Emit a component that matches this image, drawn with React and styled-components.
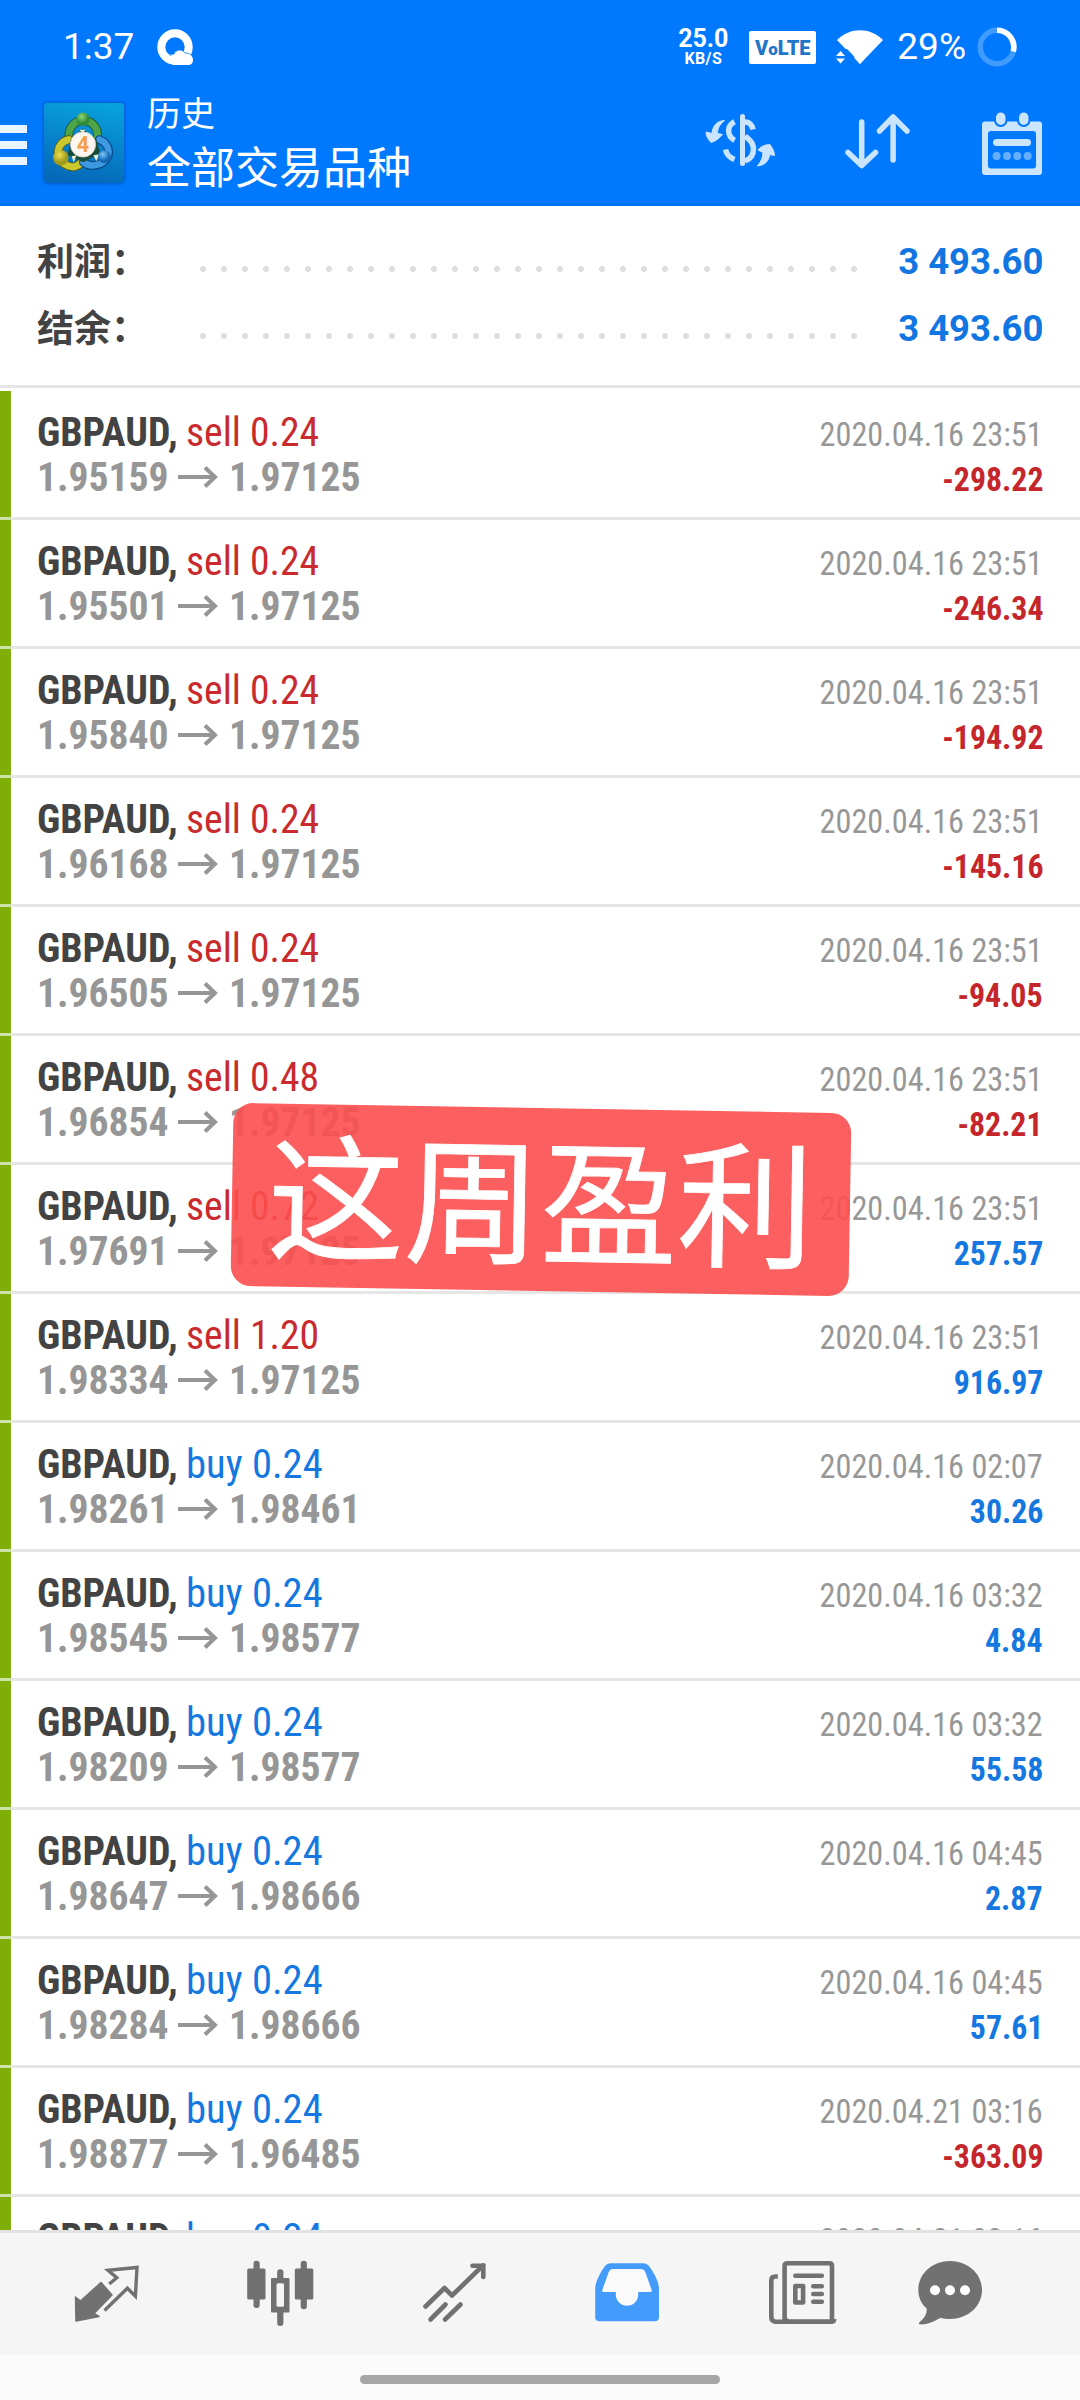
import styled, { createGlobalStyle } from "styled-components";

const GlobalStyle = createGlobalStyle`
    * {
        box-sizing: border-box;
    }
    body {
        margin: 0;
        background: #fff;
        font-family: Roboto, "Noto Sans CJK SC", sans-serif;
    }
`

const Screen = styled.div`
    position: relative;
    width: 1080px;
    height: 2400px;
    display: flex;
    flex-direction: column;
    overflow: hidden;
    background: #fff;
`

const Header = styled.header`
    height: 206px;
    flex: none;
    background: #0079ff;
    color: #fff;
    border-bottom: 3px solid #0073ee;
`

const StatusBar = styled.div`
    height: 94px;
    display: flex;
    align-items: center;
    padding: 0 63px 0 63px;
`

const Clock = styled.span`
    width: 94px;
    font-size: 37px;
    line-height: 94px;
`

const StatusIcons = styled.div`
    display: flex;
    align-items: center;
    margin-left: auto;
`

const NetSpeed = styled.div`
    width: 50px;
    margin-right: 21px;
    display: flex;
    flex-direction: column;
    align-items: center;
    font-weight: 700;
    font-size: 25px;
    line-height: 23px;
    white-space: nowrap;
`

const NetUnit = styled.span`
    font-size: 16px;
    line-height: 17px;
    letter-spacing: 0.4px;
`

const Volte = styled.span`
    width: 67px;
    height: 33px;
    margin: 1px 20px 0 0;
    border-radius: 2px;
    background: #fff;
    color: #1f76c8;
    font-size: 20px;
    font-weight: 900;
    line-height: 34px;
    text-align: center;
`

const VolteO = styled.span`
    font-size: 17px;
`

const Battery = styled.span`
    margin: 0 11px 0 13px;
    font-size: 37px;
    line-height: 94px;
`

const AppBar = styled.div`
    height: 109px;
    display: flex;
    align-items: flex-start;
`

const Menu = styled.div`
    width: 27px;
    height: 40px;
    margin: 31px 17px 0 0;
    display: flex;
    flex-direction: column;
    justify-content: space-between;
`

const MenuLine = styled.span`
    height: 8px;
    background: #eaf6ff;
`

const Logo = styled.svg`
    width: 80px;
    height: 80px;
    margin-top: 9px;
    border-radius: 4px;
    box-shadow: 0 0 3px 1px rgba(0, 60, 150, 0.5);
`

const Titles = styled.div`
    flex: 1;
    margin-left: 23px;
    white-space: nowrap;
`

const Caption = styled.div`
    font-size: 34px;
    line-height: 40px;
`

const Title = styled.div`
    font-size: 44px;
    line-height: 64px;
    margin-top: 3px;
`

const Actions = styled.div`
    display: flex;
    gap: 62px;
    margin: 15px 32px 0 0;
`

const Summary = styled.section`
    height: 182px;
    flex: none;
    padding: 22px 37px 0;
    border-bottom: 3px solid #e6e6e6;
`

const SummaryRow = styled.div`
    height: 67px;
    display: flex;
    align-items: center;
`

const SummaryLabel = styled.span`
    width: 163px;
    padding-bottom: 5px;
    font-size: 37px;
    font-weight: 600;
    color: #434343;
    white-space: nowrap;
`

const Dots = styled.span`
    width: 672px;
    height: 6px;
    margin-top: 15px;
    background: radial-gradient(circle at 3px 3px, #dedede 2.6px, transparent 3.4px) 0 0 / 21px 6px;
`

const SummaryValue = styled.span`
    margin-left: auto;
    font-size: 37px;
    font-weight: 700;
    color: #1176e2;
    transform: scaleX(0.985);
    transform-origin: right;
`

const List = styled.ul`
    flex: 1;
    min-height: 0;
    overflow: hidden;
    margin: 0;
    padding: 3px 0 0;
    list-style: none;
`

const Deal = styled.li`
    height: 129px;
    display: flex;
    padding-right: 37px;
    border-bottom: 3px solid #e6e6e6;
    font-family: "Roboto Condensed", Roboto, sans-serif;
    font-stretch: 75%;
    white-space: nowrap;
`

const Stripe = styled.span`
    width: 11px;
    background: #7fae08;
    box-shadow: 0 3px 0 #cfe2a6;
`

const DealInfo = styled.div`
    flex: 1;
    padding: 19px 0 0 26px;
`

const DealMeta = styled.div`
    padding-top: 21px;
    display: flex;
    flex-direction: column;
    align-items: flex-end;
`

const Line = styled.div`
    height: 45px;
    display: flex;
    align-items: center;
    font-size: 41px;
    line-height: 45px;
`

const Symbol = styled.span`
    width: 149px;
    font-weight: 700;
    color: #434343;
    transform: scaleX(0.97);
    transform-origin: left;
`

const Volume = styled.span`
    color: ${({ $side }) => ($side === "sell" ? "#c92a2e" : "#1478e0")};
    transform: scaleX(${({ $side }) => ($side === "sell" ? 0.967 : 0.99)});
    transform-origin: left;
`

const Price = styled.span`
    width: 130px;
    font-weight: 700;
    color: #969696;
    transform: scaleX(0.966);
    transform-origin: left;
`

const PriceArrow = styled.svg`
    flex: none;
    margin: 0 11px 0 11px;
`

const Time = styled.span`
    font-size: 33.5px;
    line-height: 45px;
    color: #979797;
    transform: scaleX(0.963);
    transform-origin: right;
`

const Profit = styled.span`
    font-size: 33.5px;
    line-height: 45px;
    font-weight: 700;
    color: ${({ $loss }) => ($loss ? "#c4262c" : "#1478e0")};
    transform: scaleX(0.95);
    transform-origin: right;
`

const TabBar = styled.nav`
    height: 125px;
    flex: none;
    display: flex;
    gap: 101.4px;
    padding: 23px 0 0 71px;
    background: #f5f5f5;
    border-top: 3px solid #e2e2e2;
`

const Tab = styled.span`
    width: 72px;
    height: 72px;
    flex: none;
    color: ${({ $active }) => ($active ? "#439bfb" : "#717171")};

    &:last-child {
        margin-left: -23.5px;
    }
`

const GestureArea = styled.div`
    height: 45px;
    flex: none;
    padding-top: 20px;
    background: #fafafa;
`

const GestureBar = styled.div`
    width: 360px;
    height: 9px;
    margin: 0 auto;
    border-radius: 5px;
    background: #a6a6a6;
`

const Sticker = styled.div`
    position: absolute;
    left: 232px;
    top: 1108px;
    width: 618px;
    height: 183px;
    border-radius: 20px;
    background: rgba(252, 78, 78, 0.9);
    color: #fff;
    font-family: "Noto Sans CJK SC", sans-serif;
    font-size: 136.5px;
    font-weight: 400;
    line-height: 174px;
    text-align: center;
    white-space: nowrap;
    -webkit-text-stroke: 0.8px #fff;
    transform: rotate(0.97deg);
`

const deals = [
    { side: "sell", lots: "0.24", open: "1.95159", close: "1.97125", time: "2020.04.16 23:51", profit: "-298.22" },
    { side: "sell", lots: "0.24", open: "1.95501", close: "1.97125", time: "2020.04.16 23:51", profit: "-246.34" },
    { side: "sell", lots: "0.24", open: "1.95840", close: "1.97125", time: "2020.04.16 23:51", profit: "-194.92" },
    { side: "sell", lots: "0.24", open: "1.96168", close: "1.97125", time: "2020.04.16 23:51", profit: "-145.16" },
    { side: "sell", lots: "0.24", open: "1.96505", close: "1.97125", time: "2020.04.16 23:51", profit: "-94.05" },
    { side: "sell", lots: "0.48", open: "1.96854", close: "1.97125", time: "2020.04.16 23:51", profit: "-82.21" },
    { side: "sell", lots: "0.72", open: "1.97691", close: "1.97125", time: "2020.04.16 23:51", profit: "257.57" },
    { side: "sell", lots: "1.20", open: "1.98334", close: "1.97125", time: "2020.04.16 23:51", profit: "916.97" },
    { side: "buy", lots: "0.24", open: "1.98261", close: "1.98461", time: "2020.04.16 02:07", profit: "30.26" },
    { side: "buy", lots: "0.24", open: "1.98545", close: "1.98577", time: "2020.04.16 03:32", profit: "4.84" },
    { side: "buy", lots: "0.24", open: "1.98209", close: "1.98577", time: "2020.04.16 03:32", profit: "55.58" },
    { side: "buy", lots: "0.24", open: "1.98647", close: "1.98666", time: "2020.04.16 04:45", profit: "2.87" },
    { side: "buy", lots: "0.24", open: "1.98284", close: "1.98666", time: "2020.04.16 04:45", profit: "57.61" },
    { side: "buy", lots: "0.24", open: "1.98877", close: "1.96485", time: "2020.04.21 03:16", profit: "-363.09" },
    { side: "buy", lots: "0.24", open: "1.98561", close: "1.96485", time: "2020.04.21 03:16", profit: "-316.40" },
]

function BrowserIcon() {
    return (
        <svg width="36" height="36" viewBox="0 0 36 36">
            <circle cx="18" cy="18" r="13.7" fill="none" stroke="#fff" strokeWidth="8" />
            <path d="M10 31c1-5 4-6 7-6 1-4 8-6 11-1 5 0 8 3 8 7 0 3-2 5-5 5H16z" fill="#fff" />
            <path d="M13 26.5c2-1 3-1 4-1.500 1-4 8-6 11-1 3 0 5 1 6 2" fill="none" stroke="#0079ff" strokeWidth="0.8" />
        </svg>
    )
}

function WifiIcon() {
    return (
        <svg width="48" height="36" viewBox="0 0 48 36">
            <path d="M1 11C14-2 34-2 47 11L24 35z" fill="#fff" />
            <path d="M-1 20h12l8 8-8 8H-1z" fill="#0079ff" />
            <path d="M13 21l11 14 6-7-10-12z" fill="#fff" />
            <path d="M0 27l4.500-5 4.500 5zM0 29.500h9l-4.500 5z" fill="#fff" />
        </svg>
    )
}

function BatteryIcon() {
    return (
        <svg width="40" height="40" viewBox="0 0 40 40" fill="none" strokeWidth="5.500">
            <circle cx="20" cy="20" r="16.800" stroke="#409bff" />
            <path d="M20 3.200A16.800 16.800 0 0 1 36.200 24.500" stroke="#fff" />
        </svg>
    )
}

function LogoIcon() {
    return (
        <Logo viewBox="0 0 81 81">
            <defs>
                <linearGradient id="bg" x1="0.6" y1="0" x2="0.4" y2="1">
                    <stop offset="0" stopColor="#08a0dc" />
                    <stop offset="0.5" stopColor="#0783cc" />
                    <stop offset="1" stopColor="#0568b8" />
                </linearGradient>
                <radialGradient id="green" cx="0.4" cy="0.3">
                    <stop offset="0" stopColor="#8fd873" />
                    <stop offset="1" stopColor="#2f8a3c" />
                </radialGradient>
                <radialGradient id="yellow" cx="0.4" cy="0.3">
                    <stop offset="0" stopColor="#f0e050" />
                    <stop offset="1" stopColor="#a09a1c" />
                </radialGradient>
                <radialGradient id="blue" cx="0.4" cy="0.3">
                    <stop offset="0" stopColor="#7cc8f5" />
                    <stop offset="1" stopColor="#1468b4" />
                </radialGradient>
            </defs>
            <rect width="81" height="81" fill="url(#bg)" />
            <g fill="none" strokeLinecap="round">
                <path d="M26 37a14.500 14.500 0 1 1 27 1" stroke="#1b5a3c" strokeWidth="9" />
                <path d="M26 37a14.500 14.500 0 1 1 27 1" stroke="#4ea548" strokeWidth="7" />
                <path d="M25 37c-13 3-14 19-4 25 6 4 12 3 16-1" stroke="#5c6020" strokeWidth="9" />
                <path d="M25 37c-13 3-14 19-4 25 6 4 12 3 16-1" stroke="#cbc92e" strokeWidth="7" />
                <path d="M56 37c10 4 12 14 6 21-6 6-16 7-22 2" stroke="#0c4a8c" strokeWidth="9" />
                <path d="M56 37c10 4 12 14 6 21-6 6-16 7-22 2" stroke="#3d9ae0" strokeWidth="6.500" />
            </g>
            <path d="M27 37l12-11 14 11 4 14-17 9-16-7z" fill="#174c3c" />
            <path d="M28 54l5-1-3 7zM50 53l6-1-3 7zM36 27l6 0-3 4z" fill="#e5efcf" />
            <circle cx="39.500" cy="16.500" r="6.800" fill="url(#green)" />
            <circle cx="17" cy="55.500" r="7.800" fill="url(#yellow)" />
            <circle cx="61" cy="54.500" r="6.500" fill="url(#blue)" />
            <circle cx="39.500" cy="42" r="12.800" fill="#fcf6f0" stroke="#cfc8b8" strokeWidth="0.8" />
            <text x="39.500" y="49.500" textAnchor="middle" fontSize="22" fontWeight="700" fill="#f3a04a">4</text>
        </Logo>
    )
}

function CurrencyIcon() {
    return (
        <svg width="80" height="66" viewBox="0 5 80 66" fill="none" stroke="#cce5ff" strokeWidth="5.500">
            <path d="M42.500 12.500v47" strokeLinecap="round" strokeWidth="5" />
            <path d="M45 18c5 0 7 3 8 7.500M45 32c3 3 8 5 8.500 12.500 0 7-4 11-8.500 12.500" />
            <path d="M34.600 17.800c-8 4-8 14 0 18.500M25.500 45.500c1 5 4 8 9 10" />
            <g fill="#cce5ff" stroke="#cce5ff" strokeWidth="1" strokeLinejoin="round">
                <path d="M24.500 16.500C16 17 12.500 23 12 29.500l-6-1.500c0 4 2 7 5 10.500 4-1 8-4 11.500-8l-5-1c0-5 2-9 7-13z" />
                <path d="M57.500 62C66 61 69 56 69.500 50.500l5 1c0-4-2-7-4.500-11-5 0-9 2-12 5.500l5 2.500c0 5-2 9-5.500 13.500z" />
            </g>
        </svg>
    )
}

function SortIcon() {
    return (
        <svg width="72" height="66" viewBox="0.5 0 72 66" fill="none" stroke="#cce5ff" strokeWidth="5.500" strokeLinecap="round" strokeLinejoin="round">
            <path d="M20.200 13v43M6.500 43.500l13.700 13L34 43.500" />
            <path d="M51.600 51V8M38 22l13.600-14L65.500 22" />
        </svg>
    )
}

function CalendarIcon() {
    return (
        <svg width="72" height="70" viewBox="0 0 72 70" fill="#cce5ff">
            <path fillRule="evenodd" d="M9 12.500h54q3 0 3 3V63q0 3-3 3H9q-3 0-3-3V15.500q0-3 3-3zM15 22q-3 0-3 3v31.500q0 3 3 3h42q3 0 3-3V25q0-3-3-3z" />
            <g stroke="#0079ff" strokeWidth="2">
                <rect x="19" y="2.500" width="11.500" height="14.500" rx="5.700" />
                <rect x="42" y="2.500" width="11.500" height="14.500" rx="5.700" />
            </g>
            <rect x="17" y="30" width="38" height="7" rx="3.500" />
            <g opacity="0.5">
                <circle cx="20.600" cy="47" r="4" />
                <circle cx="31" cy="47" r="4" />
                <circle cx="41.300" cy="47" r="4" />
                <circle cx="51.700" cy="47" r="4" />
            </g>
        </svg>
    )
}

function QuotesIcon() {
    return (
        <svg width="72" height="72" viewBox="0 0 72 72">
            <path d="M4.500 41l5 4L30 26.500 41 39 23 57.500l5 3L5 65z" fill="currentColor" stroke="currentColor" strokeWidth="1.500" strokeLinejoin="round" />
            <path d="M38.200 28l7.600-6.300-8.800-7.500 29-2.700-1.600 28.700-8-8L33.500 54.500" fill="none" stroke="currentColor" strokeWidth="3.400" />
        </svg>
    )
}

function ChartIcon() {
    return (
        <svg width="72" height="72" viewBox="0 0 72 72" fill="currentColor">
            <rect x="3.200" y="12.500" width="18.300" height="31" rx="1.500" />
            <rect x="9.500" y="4.800" width="6.200" height="47.200" rx="3" />
            <rect x="50.800" y="12.500" width="18.500" height="31" rx="1.500" />
            <rect x="56.700" y="4.800" width="6.200" height="48.500" rx="3" />
            <path fillRule="evenodd" d="M28 22h16.500q1 0 1 1v32.500q0 1-1 1H28q-1 0-1-1V23q0-1 1-1zM34 27.300q-1.500 0-1.500 1.500v20.500q0 1.500 1.500 1.500h4.500q1.500 0 1.500-1.500V28.800q0-1.500-1.500-1.500z" />
            <rect x="33.200" y="13.300" width="6.200" height="12" rx="3" />
            <rect x="33.200" y="53" width="6.200" height="17" rx="3" />
        </svg>
    )
}

function TradeIcon() {
    return (
        <svg width="72" height="72" viewBox="0 0 72 72" fill="none" stroke="currentColor" strokeWidth="4.600" strokeLinecap="round">
            <path d="M7.500 50.500l19-18.500 7.500 7.500 31-30" strokeLinejoin="round" />
            <path d="M54.500 9.800h10.800V21" />
            <path d="M12.500 63.500l15-15M27 63.500l15.500-15" />
        </svg>
    )
}

function HistoryIcon() {
    return (
        <svg width="72" height="72" viewBox="0 0 72 72">
            <path d="M18 11h36l8 26H48l-3 15H27l-3-15H10z" fill="#fafafa" />
            <path fill="currentColor" fillRule="evenodd" d="M20 7.300h32q4.500 0 6.500 3.500C63 17 68 26 68 33v28q0 4.300-4.300 4.300H8.500q-4.300 0-4.300-4.300V33c0-7 5-16 9.300-22.200q2-3.500 6.500-3.500zM22 13q-3 0-4.300 3L11.300 34q-.5 2 1.500 2h12v2.500a11.200 11.200 0 0 0 22.400 0V36h12q2 0 1.500-2L54.300 16q-1.300-3-4.300-3z" />
        </svg>
    )
}

function NewsIcon() {
    return (
        <svg width="72" height="72" viewBox="0 0 72 72" fill="none" stroke="currentColor" strokeWidth="4.600">
            <path d="M69.200 63q0 2.800-3 2.800H10.500Q6.300 65 6.300 61V24.500q0-4 4-4h2.500" />
            <path d="M19.600 65V10q0-2.700 2.700-2.700h42q2.700 0 2.700 2.700v53q0 2.800-2.700 2.800h-42" />
            <path d="M20 60q0 3 3.500 5" strokeWidth="3" />
            <path d="M30.300 19.800h26.500M48.300 30.300h8.500M48.300 38h8.500M48.300 45.800h8.500" strokeLinecap="round" />
            <rect x="30.300" y="30" width="7.800" height="16.500" strokeLinejoin="round" />
        </svg>
    )
}

function ChatIcon() {
    return (
        <svg width="72" height="72" viewBox="0 0 72 72">
            <path d="M36 5C53.500 5 68 17.500 68 34S53.500 63 36 63c-3.500 0-6-.3-9.500-1.300C20 65.500 12 69 5.500 68.300c-1.500-.5 0-2 1-3 4.500-4 7-8.500 6-13C7 47.500 4.300 41 4.300 34 4.300 17.500 18.500 5 36 5z" fill="currentColor" />
            <g fill="#fff">
                <circle cx="21" cy="34.300" r="5" />
                <circle cx="36" cy="34.300" r="5" />
                <circle cx="51" cy="34.300" r="5" />
            </g>
        </svg>
    )
}

function DealItem({ side, lots, open, close, time, profit }) {
    return (
        <Deal>
            <Stripe />
            <DealInfo>
                <Line>
                    <Symbol>GBPAUD,</Symbol>
                    <Volume $side={side}>{side} {lots}</Volume>
                </Line>
                <Line>
                    <Price>{open}</Price>
                    <PriceArrow width="40" height="24" viewBox="0 0 40 24" fill="none" stroke="#969696" strokeWidth="4">
                        <path d="M0 11h37M27 1.500L37 11l-10 9.500" />
                    </PriceArrow>
                    <Price>{close}</Price>
                </Line>
            </DealInfo>
            <DealMeta>
                <Time>{time}</Time>
                <Profit $loss={profit.startsWith("-")}>{profit}</Profit>
            </DealMeta>
        </Deal>
    )
}

function App() {
    return (
        <Screen>
            <GlobalStyle />
            <Header>
                <StatusBar>
                    <Clock>1:37</Clock>
                    <BrowserIcon />
                    <StatusIcons>
                        <NetSpeed>
                            25.0
                            <NetUnit>KB/S</NetUnit>
                        </NetSpeed>
                        <Volte>V<VolteO>o</VolteO>LTE</Volte>
                        <WifiIcon />
                        <Battery>29%</Battery>
                        <BatteryIcon />
                    </StatusIcons>
                </StatusBar>
                <AppBar>
                    <Menu>
                        <MenuLine />
                        <MenuLine />
                        <MenuLine />
                    </Menu>
                    <LogoIcon />
                    <Titles>
                        <Caption>历史</Caption>
                        <Title>全部交易品种</Title>
                    </Titles>
                    <Actions>
                        <CurrencyIcon />
                        <SortIcon />
                        <CalendarIcon />
                    </Actions>
                </AppBar>
            </Header>
            <Summary>
                <SummaryRow>
                    <SummaryLabel>利润：</SummaryLabel>
                    <Dots />
                    <SummaryValue>3 493.60</SummaryValue>
                </SummaryRow>
                <SummaryRow>
                    <SummaryLabel>结余：</SummaryLabel>
                    <Dots />
                    <SummaryValue>3 493.60</SummaryValue>
                </SummaryRow>
            </Summary>
            <List>
                {deals.map((deal, i) => <DealItem key={i} {...deal} />)}
            </List>
            <TabBar>
                <Tab><QuotesIcon /></Tab>
                <Tab><ChartIcon /></Tab>
                <Tab><TradeIcon /></Tab>
                <Tab $active><HistoryIcon /></Tab>
                <Tab><NewsIcon /></Tab>
                <Tab><ChatIcon /></Tab>
            </TabBar>
            <GestureArea>
                <GestureBar />
            </GestureArea>
            <Sticker>这周盈利</Sticker>
        </Screen>
    )
}

export default App;
